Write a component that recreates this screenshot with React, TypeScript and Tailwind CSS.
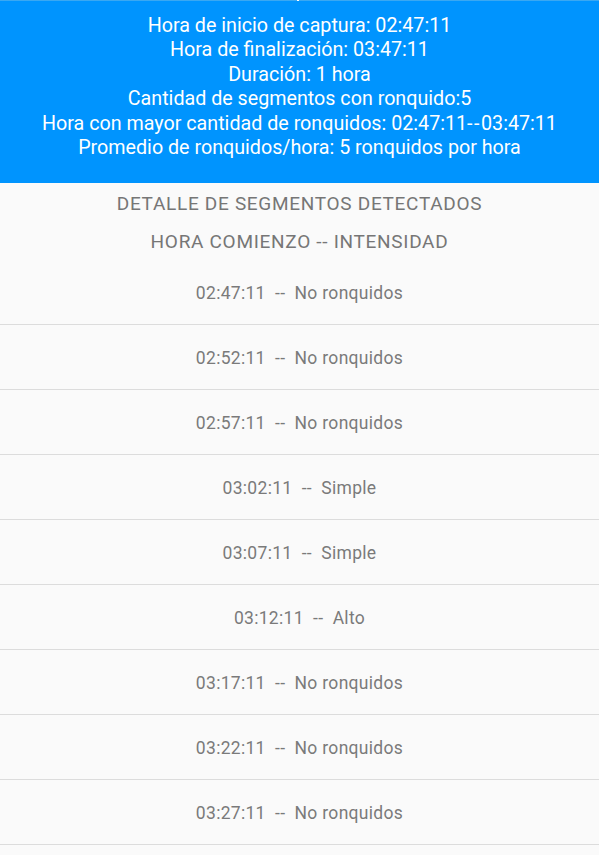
import React from "react";

const rows: [string, string][] = [
  ["02:47:11", "No ronquidos"],
  ["02:52:11", "No ronquidos"],
  ["02:57:11", "No ronquidos"],
  ["03:02:11", "Simple"],
  ["03:07:11", "Simple"],
  ["03:12:11", "Alto"],
  ["03:17:11", "No ronquidos"],
  ["03:22:11", "No ronquidos"],
  ["03:27:11", "No ronquidos"],
  ["03:32:11", "No ronquidos"],
];

export default function App() {
  return (
    <div
      className="w-[599px] h-[855px] overflow-hidden bg-[#fafafa]"
      style={{ fontFamily: "Roboto, 'Noto Sans', sans-serif" }}
    >
      <div className="relative bg-[#0094fe] border-t border-[#3aa8f2] pt-[13px] pb-[23px] text-white text-[19.7px] leading-[24.4px] text-center">
        <span className="absolute left-[297px] top-[-1px] w-[2px] h-[1px] bg-white" />
        <div>Hora de inicio de captura: 02:47:11</div>
        <div>Hora de finalización: 03:47:11</div>
        <div>Duración: 1 hora</div>
        <div>Cantidad de segmentos con ronquido:5</div>
        <div>Hora con mayor cantidad de ronquidos: 02:47:11<span className="tracking-[1.5px]">--</span>03:47:11</div>
        <div>Promedio de ronquidos/hora: 5 ronquidos por hora</div>
      </div>
      <div className="pt-[9px] text-[#767676] text-[19px] tracking-[0.7px] leading-[24px] text-center">
        <div>DETALLE DE SEGMENTOS DETECTADOS</div>
        <div className="mt-[14px]">HORA COMIENZO -- INTENSIDAD</div>
      </div>
      <div className="mt-[6px]">
        {rows.map(([t, v], i) => (
          <div
            key={i}
            className="h-[65px] flex items-center justify-center pt-[2px] border-b border-[#dcdcdc] text-[#7a7a7a] text-[17.5px] tracking-[0.3px] whitespace-pre"
          >
            {`${t}  --  ${v}`}
          </div>
        ))}
      </div>
    </div>
  );
}
